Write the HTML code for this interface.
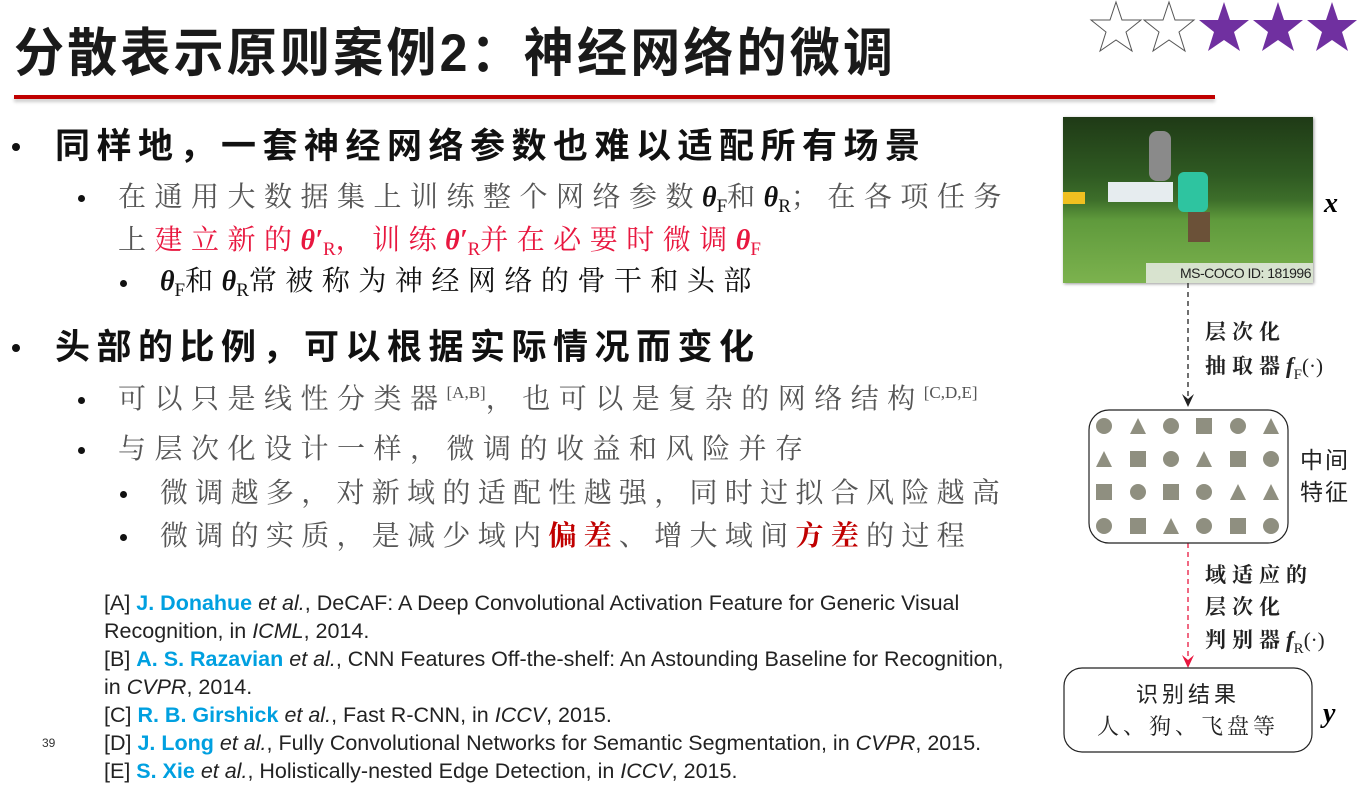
<!DOCTYPE html>
<html><head><meta charset="utf-8"><style>
body{margin:0;width:1368px;height:786px;overflow:hidden;background:#fff;position:relative;font-family:"Liberation Sans","Noto Sans CJK SC",sans-serif}
.a{position:absolute;white-space:nowrap;line-height:1}
.t{font-size:50px;font-weight:bold;color:#1a1a1a;letter-spacing:3.2px;transform:scaleY(1.05)}
.m{font-size:35px;font-weight:bold;color:#111;letter-spacing:6.5px}
.s{font-size:28px;color:#555;letter-spacing:8.5px;font-family:"Liberation Serif","Noto Serif CJK SC",serif}
.k{color:#111}
.r{color:#e8173f}
.dr{color:#c00000;font-weight:bold}
.th{font-family:"Liberation Serif",serif;font-style:italic;font-weight:bold;letter-spacing:0}
sub{font-size:19px;font-style:normal;font-weight:normal;vertical-align:-6px;line-height:0}
sup{font-size:17px;letter-spacing:0;vertical-align:10px;line-height:0}
.dot{position:absolute;width:8px;height:8px;border-radius:50%;background:#111}
.ref{font-size:21.5px;color:#222;line-height:28px;position:absolute;left:104px;top:589px;width:930px}
.ref b{color:#00a0e0}
.lb{font-size:21px;letter-spacing:6px;font-family:"Noto Serif CJK SC",serif;color:#222;font-weight:bold}
</style></head><body>
<div class="a t" style="left:14px;top:28px">分散表示原则案例2：神经网络的微调</div>
<div class="a" style="left:14px;top:95px;width:1201px;height:4px;background:#c00000;box-shadow:0 3px 3px #ccc"></div>
<svg class="a" style="left:1088px;top:0" width="280" height="54" viewBox="0 0 280 54">
<g stroke="#555" stroke-width="1">
<polygon fill="#fff" points="28,2 34,20 53,20 38,32 44,51 28,40 12,51 18,32 3,20 22,20"/>
<polygon fill="#fff" transform="translate(53,0)" points="28,2 34,20 53,20 38,32 44,51 28,40 12,51 18,32 3,20 22,20"/>
</g><g fill="#7030a0">
<polygon transform="translate(108,0)" points="28,2 34,20 53,20 38,32 44,51 28,40 12,51 18,32 3,20 22,20"/>
<polygon transform="translate(162,0)" points="28,2 34,20 53,20 38,32 44,51 28,40 12,51 18,32 3,20 22,20"/>
<polygon transform="translate(216,0)" points="28,2 34,20 53,20 38,32 44,51 28,40 12,51 18,32 3,20 22,20"/>
</g></svg>

<div class="dot" style="left:12px;top:143px"></div>
<div class="a m" style="left:55px;top:129px">同样地，一套神经网络参数也难以适配所有场景</div>
<div class="dot" style="left:78px;top:195px;width:7px;height:7px"></div>
<div class="a s" style="left:118px;top:184px">在通用大数据集上训练整个网络参数<span class="th k">θ<sub>F</sub></span>和<span class="th k">θ<sub>R</sub></span>；在各项任务</div>
<div class="a s" style="left:118px;top:227px">上<span class="r">建立新的<span class="th">θ′<sub>R</sub></span>，训练<span class="th">θ′<sub>R</sub></span>并在必要时微调<span class="th">θ<sub>F</sub></span></span></div>
<div class="dot" style="left:120px;top:280px;width:7px;height:7px"></div>
<div class="a s k" style="left:160px;top:268px"><span class="th">θ<sub>F</sub></span>和<span class="th">θ<sub>R</sub></span>常被称为神经网络的骨干和头部</div>

<div class="dot" style="left:12px;top:344px"></div>
<div class="a m" style="left:55px;top:330px">头部的比例，可以根据实际情况而变化</div>
<div class="dot" style="left:78px;top:397px;width:7px;height:7px"></div>
<div class="a s" style="left:118px;top:386px">可以只是线性分类器<sup>[A,B]</sup>，也可以是复杂的网络结构<sup>[C,D,E]</sup></div>
<div class="dot" style="left:78px;top:447px;width:7px;height:7px"></div>
<div class="a s" style="left:118px;top:436px">与层次化设计一样，微调的收益和风险并存</div>
<div class="dot" style="left:120px;top:491px;width:7px;height:7px"></div>
<div class="a s" style="left:160px;top:480px;letter-spacing:7.3px">微调越多，对新域的适配性越强，同时过拟合风险越高</div>
<div class="dot" style="left:120px;top:534px;width:7px;height:7px"></div>
<div class="a s" style="left:160px;top:523px;letter-spacing:7.3px">微调的实质，是减少域内<span class="dr">偏差</span>、增大域间<span class="dr">方差</span>的过程</div>

<div class="ref">
[A] <b>J. Donahue</b> <i>et al.</i>, DeCAF: A Deep Convolutional Activation Feature for Generic Visual<br>Recognition, in <i>ICML</i>, 2014.<br>
[B] <b>A. S. Razavian</b> <i>et al.</i>, CNN Features Off-the-shelf: An Astounding Baseline for Recognition,<br>in <i>CVPR</i>, 2014.<br>
[C] <b>R. B. Girshick</b> <i>et al.</i>, Fast R-CNN, in <i>ICCV</i>, 2015.<br>
[D] <b>J. Long</b> <i>et al.</i>, Fully Convolutional Networks for Semantic Segmentation, in <i>CVPR</i>, 2015.<br>
[E] <b>S. Xie</b> <i>et al.</i>, Holistically-nested Edge Detection, in <i>ICCV</i>, 2015.
</div>
<div class="a" style="left:42px;top:737px;font-size:12px;color:#333">39</div>

<div class="a" style="left:1063px;top:117px;width:250px;height:166px;box-shadow:1px 1px 3px #999;background:linear-gradient(180deg,#1f3a16 0%,#2f5a22 35%,#3d6e2a 50%,#5f9a3c 62%,#7cb24e 100%)">
<div class="a" style="left:115px;top:55px;width:30px;height:40px;background:#2ec4a0;border-radius:6px"></div>
<div class="a" style="left:125px;top:95px;width:22px;height:30px;background:#6b5138"></div>
<div class="a" style="left:45px;top:65px;width:65px;height:20px;background:#e6ecef"></div>
<div class="a" style="left:0;top:75px;width:22px;height:12px;background:#f0c020"></div>
<div class="a" style="left:86px;top:14px;width:22px;height:50px;background:#8a8a8a;border-radius:8px"></div>
<div class="a" style="left:83px;top:146px;width:165px;height:20px;background:rgba(240,240,240,.8);font-size:14px;color:#222;line-height:20px;text-align:right;padding-right:2px;letter-spacing:-.5px">MS-COCO ID: 181996</div>
</div>
<div class="a th" style="left:1324px;top:190px;font-size:28px">x</div>

<svg class="a" style="left:1060px;top:283px" width="300" height="470">
<line x1="128" y1="0" x2="128" y2="120" stroke="#222" stroke-width="1.3" stroke-dasharray="5,4"/>
<path d="M122,111 L128,124 L134,111 L128,116Z" fill="#222"/>
<line x1="128" y1="260" x2="128" y2="380" stroke="#e8173f" stroke-width="1.3" stroke-dasharray="5,4"/>
<path d="M122,372 L128,385 L134,372 L128,377Z" fill="#e8173f"/>
<rect x="29" y="127" width="199" height="133" rx="20" fill="none" stroke="#222" stroke-width="1.2"/>
<rect x="4" y="385" width="248" height="84" rx="18" fill="none" stroke="#222" stroke-width="1.2"/>
<g fill="#8f8f80">
<circle cx="44" cy="143" r="8"/><polygon points="78,135 86,151 70,151"/><circle cx="111" cy="143" r="8"/><rect x="136" y="135" width="16" height="16"/><circle cx="178" cy="143" r="8"/><polygon points="211,135 219,151 203,151"/>
<polygon points="44,168 52,184 36,184"/><rect x="70" y="168" width="16" height="16"/><circle cx="111" cy="176" r="8"/><polygon points="144,168 152,184 136,184"/><rect x="170" y="168" width="16" height="16"/><circle cx="211" cy="176" r="8"/>
<rect x="36" y="201" width="16" height="16"/><circle cx="78" cy="209" r="8"/><rect x="103" y="201" width="16" height="16"/><circle cx="144" cy="209" r="8"/><polygon points="178,201 186,217 170,217"/><polygon points="211,201 219,217 203,217"/>
<circle cx="44" cy="243" r="8"/><rect x="70" y="235" width="16" height="16"/><polygon points="111,235 119,251 103,251"/><circle cx="144" cy="243" r="8"/><rect x="170" y="235" width="16" height="16"/><circle cx="211" cy="243" r="8"/>
</g></svg>

<div class="a lb" style="left:1205px;top:321px">层次化</div>
<div class="a lb" style="left:1205px;top:354px">抽取器<span class="th" style="font-size:23px">f<sub style="font-size:15px">F</sub></span><span style="font-family:'Liberation Serif';letter-spacing:0;font-weight:normal">(·)</span></div>
<div class="a" style="left:1300px;top:449px;font-size:23px;letter-spacing:2px;color:#222">中间</div>
<div class="a" style="left:1300px;top:481px;font-size:23px;letter-spacing:2px;color:#222">特征</div>
<div class="a lb r" style="left:1205px;top:564px">域适应的</div>
<div class="a lb r" style="left:1205px;top:596px">层次化</div>
<div class="a lb r" style="left:1205px;top:628px">判别器<span class="th" style="font-size:23px">f<sub style="font-size:15px">R</sub></span><span style="font-family:'Liberation Serif';letter-spacing:0;font-weight:normal">(·)</span></div>
<div class="a" style="left:1064px;top:684px;width:248px;text-align:center;font-size:22px;letter-spacing:4px;color:#222">识别结果</div>
<div class="a" style="left:1064px;top:715px;width:248px;text-align:center;font-size:22px;letter-spacing:4px;color:#222;font-family:'Noto Serif CJK SC',serif">人、狗、飞盘等</div>
<div class="a th" style="left:1323px;top:700px;font-size:28px">y</div>
</body></html>
